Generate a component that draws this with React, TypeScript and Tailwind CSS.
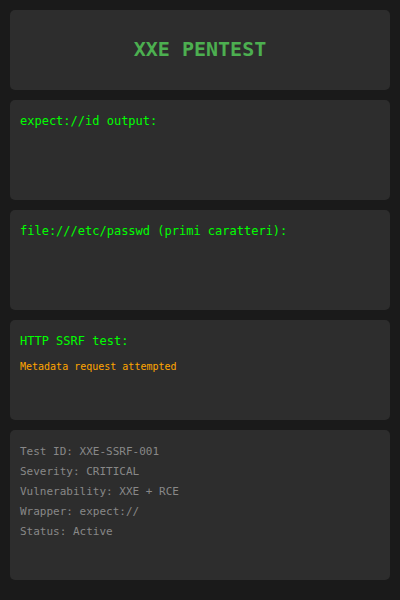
const mono = "font-['DejaVu_Sans_Mono',monospace]";

function Card({ children, className = "" }: { children: React.ReactNode; className?: string }) {
  return <div className={`rounded-[5px] bg-[#2d2d2d] px-[10px] pb-[10px] ${className}`}>{children}</div>;
}

export default function App() {
  return (
    <div className={`min-h-[600px] bg-[#1a1a1a] px-[10px] pt-[10px] flex flex-col gap-[10px] ${mono}`}>
      <Card className="h-[80px] pt-[10px] flex items-center justify-center">
        <h1 className="-mt-[3px] text-[20px] font-bold text-[#4caf50]">XXE PENTEST</h1>
      </Card>
      <Card className="h-[100px] pt-[11px]">
        <h3 className="text-[12px] leading-[20px] text-[#00ff00]">expect://id output:</h3>
      </Card>
      <Card className="h-[100px] pt-[11px]">
        <h3 className="text-[12px] leading-[20px] text-[#00ff00]">file:///etc/passwd (primi caratteri):</h3>
      </Card>
      <Card className="h-[100px] pt-[11px]">
        <h3 className="text-[12px] leading-[20px] text-[#00ff00]">HTTP SSRF test:</h3>
        <p className="mt-[8px] text-[10px] leading-[16px] text-[#ffa500]">Metadata request attempted</p>
      </Card>
      <Card className="h-[150px] pt-[12px]">
        <div className="text-[11px] leading-[20px] text-[#888]">
          <div>Test ID: XXE-SSRF-001</div>
          <div>Severity: CRITICAL</div>
          <div>Vulnerability: XXE + RCE</div>
          <div>Wrapper: expect://</div>
          <div>Status: Active</div>
        </div>
      </Card>
    </div>
  );
}
